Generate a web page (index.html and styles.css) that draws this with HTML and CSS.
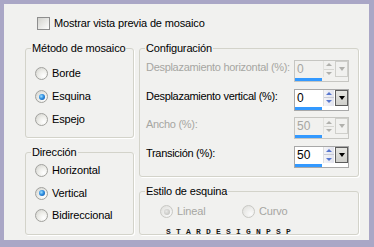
FILE: index.html
```html
<!DOCTYPE html>
<html lang="es">
<head>
<meta charset="utf-8">
<link rel="stylesheet" href="styles.css">
</head>
<body>
<div class="dialog">
  <div class="check-row"><span class="checkbox"></span><span>Mostrar vista previa de mosaico</span></div>
  <div class="columns">
    <div class="col left">
      <fieldset class="group g-metodo">
        <legend>Método de mosaico</legend>
        <div class="radio-list metodo-list">
          <div class="radio-row"><span class="radio"></span>Borde</div>
          <div class="radio-row"><span class="radio on"></span>Esquina</div>
          <div class="radio-row"><span class="radio"></span>Espejo</div>
        </div>
      </fieldset>
      <fieldset class="group g-dir">
        <legend>Dirección</legend>
        <div class="radio-list dir-list">
          <div class="radio-row"><span class="radio"></span>Horizontal</div>
          <div class="radio-row"><span class="radio on"></span>Vertical</div>
          <div class="radio-row"><span class="radio"></span>Bidireccional</div>
        </div>
      </fieldset>
    </div>
    <div class="col right">
      <fieldset class="group g-config">
        <legend>Configuración</legend>
        <div class="config-grid">
          <span class="lbl disabled">Desplazamiento horizontal (%):</span>
          <div class="spin disabled">
            <div class="spin-top"><span class="field">0</span><span class="updown"><span class="up"></span><span class="down"></span></span><span class="drop"><span class="tri"></span></span></div>
            <span class="bar"></span>
          </div>
          <span class="lbl">Desplazamiento vertical (%):</span>
          <div class="spin">
            <div class="spin-top"><span class="field">0</span><span class="updown"><span class="up"></span><span class="down"></span></span><span class="drop"><span class="tri"></span></span></div>
            <span class="bar"></span>
          </div>
          <span class="lbl disabled">Ancho (%):</span>
          <div class="spin disabled">
            <div class="spin-top"><span class="field">50</span><span class="updown"><span class="up"></span><span class="down"></span></span><span class="drop"><span class="tri"></span></span></div>
            <span class="bar"></span>
          </div>
          <span class="lbl">Transición (%):</span>
          <div class="spin">
            <div class="spin-top"><span class="field">50</span><span class="updown"><span class="up"></span><span class="down"></span></span><span class="drop"><span class="tri"></span></span></div>
            <span class="bar"></span>
          </div>
        </div>
      </fieldset>
      <fieldset class="group g-estilo">
        <legend>Estilo de esquina</legend>
        <div class="estilo-body">
          <div class="estilo-row">
            <div class="radio-row disabled lineal"><span class="radio on"></span>Lineal</div>
            <div class="radio-row disabled"><span class="radio"></span>Curvo</div>
          </div>
          <div class="watermark">STARDESIGNPSP</div>
        </div>
      </fieldset>
    </div>
  </div>
</div>
</body>
</html>
```
FILE: styles.css
```css
* { box-sizing: border-box; }
html, body { margin: 0; padding: 0; }
body {
  width: 374px;
  height: 247px;
  overflow: hidden;
  background: #aaa7c6;
  font-family: "Liberation Sans", Arial, sans-serif;
  font-size: 11px;
  letter-spacing: -0.15px;
  color: #000;
}
.dialog {
  margin: 4px 0 0 4px;
  width: 365px;
  height: 236px;
  background: #f1f1ef;
  padding: 13px 0 0 21px;
  display: flex;
  flex-direction: column;
}
.check-row {
  display: flex;
  align-items: center;
  gap: 4px;
  margin-left: 12px;
  height: 13px;
  line-height: 13px;
}
.checkbox {
  width: 13px;
  height: 13px;
  border: 1px solid #8e8e8e;
  background: linear-gradient(135deg, #d2d2cd 0%, #ececea 60%, #fdfdfd 100%);
}
.columns {
  display: flex;
  gap: 5px;
  margin-top: 12px;
}
.col { display: flex; flex-direction: column; gap: 8px; }
.col.left { width: 109px; }
.col.right { width: 220px; }

.group {
  margin: 0;
  padding: 0;
  min-width: 0;
  border: 1px solid #d3d3ca;
  border-radius: 3px;
  box-shadow: 1px 1px 0 #fff;
}
.group legend {
  margin-left: 5px;
  padding: 0 1px;
  height: 13px;
  line-height: 13px;
}
.g-metodo { height: 96px; }
.g-dir { height: 89px; }
.g-config { height: 135px; }
.g-estilo { height: 50px; }

.radio-list { display: flex; flex-direction: column; }
.metodo-list { padding: 12px 0 0 9px; gap: 10px; }
.dir-list { padding: 5px 0 0 9px; gap: 9.5px; }

.radio-row {
  display: flex;
  align-items: center;
  gap: 4px;
  height: 13px;
  line-height: 13px;
}
.radio {
  flex: none;
  width: 13px;
  height: 13px;
  border-radius: 50%;
  border: 1px solid #a2a29e;
  background: radial-gradient(circle at 70% 72%, #ffffff 0%, #eeeeea 45%, #cfcfca 100%);
  display: flex;
  align-items: center;
  justify-content: center;
}
.radio.on::after {
  content: "";
  width: 6px;
  height: 6px;
  border-radius: 50%;
  background: radial-gradient(circle at 38% 38%, #9fe0ff 0%, #2f8ee0 45%, #0b4a9c 100%);
}
.radio-row.disabled { color: #a6a6a2; }
.radio-row.disabled .radio {
  border-color: #c8c8c4;
  background: radial-gradient(circle at 70% 72%, #fafafa 0%, #ececea 50%, #dcdcd8 100%);
}
.radio-row.disabled .radio.on::after {
  background: radial-gradient(circle at 40% 40%, #e8e8e6 0%, #b8b8b4 100%);
}

.config-grid {
  display: grid;
  grid-template-columns: 1fr 55px;
  row-gap: 6.67px;
  align-items: start;
  padding: 5px 9px 0 6px;
}
.lbl { line-height: 13px; padding-top: 1px; white-space: nowrap; letter-spacing: -0.3px; }
.lbl.disabled { color: #a6a6a2; }

.spin {
  width: 55px;
  height: 22px;
  border: 1px solid #a8a8a8;
  background: #fff;
  display: flex;
  flex-direction: column;
}
.spin-top { display: flex; height: 16px; }
.field {
  flex: 1;
  padding-left: 2px;
  font-size: 12px;
  line-height: 16px;
  letter-spacing: 0;
}
.updown {
  width: 11px;
  display: flex;
  flex-direction: column;
  background: linear-gradient(90deg, #f4f4f8, #e2e4ee);
  border-left: 1px solid #e0e0e0;
}
.updown .up, .updown .down {
  flex: 1;
  display: flex;
  align-items: center;
  justify-content: center;
}
.updown .up { border-bottom: 1px solid #c9cbd6; }
.updown .up::after {
  content: "";
  border-left: 3px solid transparent;
  border-right: 3px solid transparent;
  border-bottom: 3px solid #5877cf;
}
.updown .down::after {
  content: "";
  border-left: 3px solid transparent;
  border-right: 3px solid transparent;
  border-top: 3px solid #5877cf;
}
.drop {
  width: 13px;
  margin-left: 1px;
  background: linear-gradient(#e6e6e2, #cfcfcb);
  border: 1px solid #5c5c5c;
  display: flex;
  align-items: center;
  justify-content: center;
}
.drop .tri {
  border-left: 3.5px solid transparent;
  border-right: 3.5px solid transparent;
  border-top: 4px solid #000;
}
.bar {
  width: 27px;
  height: 3px;
  margin: 1px 0 0 0;
  background: #3399ff;
}
.spin.disabled { background: #f1f1ef; border-color: #c6c6c2; }
.spin.disabled .field { color: #a6a6a2; }
.spin.disabled .updown { background: #f1f1ef; border-left-color: #e2e2de; }
.spin.disabled .updown .up { border-bottom-color: #d6d6d2; }
.spin.disabled .updown .up::after { border-bottom-color: #b0b0ac; }
.spin.disabled .updown .down::after { border-top-color: #b0b0ac; }
.spin.disabled .drop { background: #f1f1ef; border-color: #cfcfcb; }
.spin.disabled .drop .tri { border-top-color: #b0b0ac; }

.estilo-body { padding: 7px 0 0 20px; }
.estilo-row { display: flex; }
.lineal { width: 82px; }
.watermark {
  margin: 10px 0 0 6px;
  font-family: "Liberation Mono", monospace;
  font-weight: bold;
  font-size: 8px;
  line-height: 7px;
  letter-spacing: 5.2px;
  color: #1a1a1a;
}
```
